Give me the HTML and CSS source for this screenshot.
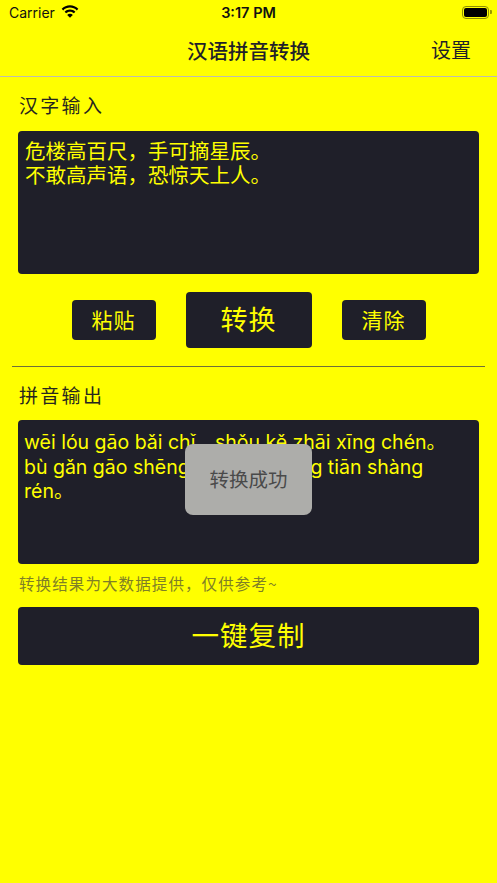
FILE: index.html
```
<!DOCTYPE html>
<html lang="zh-CN">
<head>
<meta charset="utf-8">
<title>汉语拼音转换</title>
<link rel="stylesheet" href="styles.css">
</head>
<body>
<div class="app">
  <header class="status">
    <div class="status-left">
      <span class="carrier">Carrier</span>
      <svg class="wifi" viewBox="0 0 18 13" width="18" height="13"><path d="M9 2.6c2.600 0 5 1 6.800 2.800L17.300 3.800C15.100 1.500 12.200.2 9 .2S2.900 1.500.7 3.800l1.500 1.600C4 3.600 6.400 2.600 9 2.600z"/><path d="M9 6.700c1.500 0 2.900.6 3.900 1.600l1.500-1.600C13 5.300 11.100 4.400 9 4.400s-4 .9-5.400 2.300l1.500 1.600c1-1 2.400-1.600 3.900-1.600z"/><path d="M9 8.800c-1.100 0-2.100.4-2.800 1.200L9 12.800l2.800-2.800C11.100 9.200 10.100 8.800 9 8.800z"/></svg>
    </div>
    <span class="time">3:17 PM</span>
    <div class="battery"><span class="battery-fill"></span><span class="battery-nub"></span></div>
  </header>
  <nav class="nav">
    <span class="nav-title">汉语拼音转换</span>
    <span class="nav-action">设置</span>
  </nav>
  <main class="content">
    <div class="label label-first">汉字输入</div>
    <div class="box box-input">危楼高百尺，手可摘星辰。<br>不敢高声语，恐惊天上人。</div>
    <div class="actions">
      <button class="btn btn-small">粘贴</button>
      <button class="btn btn-large">转换</button>
      <button class="btn btn-small">清除</button>
    </div>
    <div class="divider"></div>
    <div class="label label-second">拼音输出</div>
    <div class="box box-output">wēi lóu gāo bǎi chǐ，shǒu kě zhāi xīng chén。<br>bù gǎn gāo shēng yǔ，kǒng jīng tiān shàng<br>rén。</div>
    <div class="note">转换结果为大数据提供，仅供参考~</div>
    <button class="btn btn-copy">一键复制</button>
  </main>
  <div class="toast">转换成功</div>
</div>
</body>
</html>
```
FILE: styles.css
```
* { box-sizing: border-box; }
html, body { margin: 0; padding: 0; }
body { background: #ffff00; font-family: "Noto Sans CJK SC", "Noto Sans", sans-serif; color: #1f1f29; }
.app { position: relative; width: 497px; height: 883px; overflow: hidden; background: #ffff00; }
.status { height: 24px; display: flex; align-items: center; justify-content: space-between; padding: 0 7px 0 9px; position: relative; color: #111; font-family: Inter, "Liberation Sans", sans-serif; font-size: 14px; }
.status-left { display: flex; align-items: center; gap: 6px; }
.wifi { fill: #000; display: block; margin-top: -2px; }
.carrier { font-weight: 400; }
.time { position: absolute; left: 0; right: 0; text-align: center; font-weight: 600; font-size: 14.5px; }
.battery { position: relative; width: 27px; height: 13px; border: 1.5px solid #8f8f00; border-radius: 4px; padding: 1px; margin-right: 1px; }
.battery-fill { display: block; height: 100%; background: #000; border-radius: 2px; }
.battery-nub { position: absolute; right: -3.5px; top: 3px; width: 2px; height: 4px; background: #9a9a00; border-radius: 0 1px 1px 0; }
.nav { position: relative; height: 53px; display: flex; align-items: center; justify-content: flex-end; padding: 0 26px 0 0; border-bottom: 1px solid #bdbdb0; }
.nav-title { position: absolute; left: 0; right: 0; text-align: center; font-size: 20.500px; font-weight: 500; }
.nav-action { font-size: 20px; line-height: 28px; }
.content { display: flex; flex-direction: column; padding: 0 18px; }
.label { font-size: 19px; line-height: 28px; padding-left: 1px; letter-spacing: 2.300px; color: #26261f; }
.label-first { margin-top: 14px; }
.label-second { margin-top: 14px; }
.box { margin-top: 12px; height: 143px; width: 461px; padding: 7px; background: #1f1f29; color: #ffff00; border-radius: 4px; font-size: 20.500px; line-height: 24px; }
.box-output { margin-top: 11px; height: 144px; font-family: Inter, "Liberation Sans", "Noto Sans CJK SC", sans-serif; font-size: 19.500px; line-height: 24.500px; padding: 10px 6px 0; }
.actions { margin-top: 18px; display: flex; align-items: center; justify-content: center; gap: 30px; }
.btn { border: 0; margin: 0; padding: 0 0 3px; font-family: inherit; background: #1f1f29; color: #ffff00; border-radius: 4px; display: block; }
.btn-small { width: 84px; height: 40px; font-size: 21px; letter-spacing: 1px; }
.btn-large { width: 126px; height: 56px; font-size: 27px; letter-spacing: 1px; }
.divider { height: 1px; margin: 18px -6px 0 -6px; background: #6f6f3a; }
.note { margin-top: 9px; font-size: 15.500px; line-height: 20px; padding-left: 1px; letter-spacing: 1.100px; color: #7f7f26; }
.btn-copy { margin-top: 14px; width: 461px; height: 58px; padding-bottom: 5px; font-size: 27.500px; letter-spacing: 1px; }
.toast { position: absolute; left: 185px; top: 444px; width: 127px; height: 71px; display: flex; align-items: center; justify-content: center; padding-bottom: 2px; background: #adadaa; color: #4a4a4a; border-radius: 8px; font-size: 19.500px; }
```
